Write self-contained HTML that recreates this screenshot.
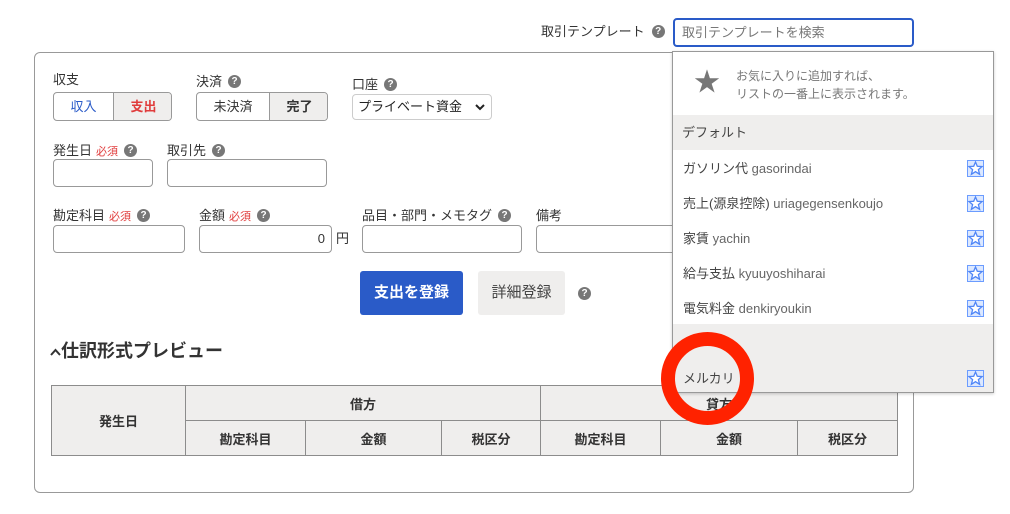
<!DOCTYPE html>
<html><head><meta charset="utf-8"><style>
*{box-sizing:border-box;margin:0;padding:0}
body{width:1010px;height:514px;background:#fff;font-family:"Liberation Sans","Noto Sans CJK JP",sans-serif;color:#333;font-size:13px;position:relative;overflow:hidden}
.a{position:absolute}
.q{display:inline-block;vertical-align:middle;width:13px;height:13px;border-radius:50%;background:#777;color:#fff;font-size:10px;font-weight:bold;text-align:center;line-height:13px;margin-left:6px;margin-top:-3px}
.in{position:absolute;border:1px solid #999;border-radius:4px;background:#fff}
.lbl{position:absolute;font-size:13px;color:#333;white-space:nowrap;line-height:16px}
.req{color:#e03c3c;font-size:11px;margin-left:4px}
table{position:absolute;left:51px;top:385px;width:847px;border-collapse:collapse;background:#efeeed}
td{border:1px solid #8c8c8c;text-align:center;font-weight:bold;font-size:13px;height:35px}
.it{position:absolute;left:0;width:321px;height:35px;padding-left:10px;line-height:35px;font-size:13px;color:#444}
.it span{color:#666}
.st{position:absolute;right:10px;top:9px;width:17px;height:17px}
</style></head><body>
<div class="lbl" style="left:541px;top:24px">取引テンプレート<span class="q" style="margin-left:7px">?</span></div>
<div class="a" style="left:673px;top:18px;width:241px;height:29px;border:2px solid #2a5bc8;border-radius:4px;padding-left:7px;line-height:25px;color:#777;font-size:13px">取引テンプレートを検索</div>

<div class="a" style="left:34px;top:52px;width:880px;height:441px;border:1px solid #999;border-radius:6px"></div>

<div class="lbl" style="left:53px;top:72px">収支</div>
<div class="in" style="left:53px;top:92px;width:119px;height:29px;overflow:hidden">
 <div class="a" style="left:0;top:0;width:59px;height:27px;line-height:27px;text-align:center;color:#2a5bc8">収入</div>
 <div class="a" style="left:59px;top:0;width:60px;height:27px;line-height:27px;text-align:center;color:#e03c3c;background:#efeeed;border-left:1px solid #999;font-weight:bold">支出</div>
</div>
<div class="lbl" style="left:196px;top:74px">決済<span class="q">?</span></div>
<div class="in" style="left:196px;top:92px;width:132px;height:29px;overflow:hidden">
 <div class="a" style="left:0;top:0;width:72px;height:27px;line-height:27px;text-align:center">未決済</div>
 <div class="a" style="left:72px;top:0;width:60px;height:27px;line-height:27px;text-align:center;background:#efeeed;border-left:1px solid #999;font-weight:bold">完了</div>
</div>
<div class="lbl" style="left:352px;top:77px">口座<span class="q">?</span></div>
<div class="in" style="left:352px;top:94px;width:140px;height:26px;border-color:#ccc;padding-left:5px;line-height:24px;font-size:13px;color:#222">プライベート資金
<svg class="a" style="right:6px;top:8px" width="10" height="8" viewBox="0 0 10 8"><path d="M1 2 L5 6 L9 2" fill="none" stroke="#222" stroke-width="2"/></svg></div>

<div class="lbl" style="left:53px;top:143px">発生日<span class="req">必須</span><span class="q">?</span></div>
<div class="lbl" style="left:167px;top:143px">取引先<span class="q">?</span></div>
<div class="in" style="left:53px;top:159px;width:100px;height:28px"></div>
<div class="in" style="left:167px;top:159px;width:160px;height:28px"></div>

<div class="lbl" style="left:53px;top:208px">勘定科目<span class="req">必須</span><span class="q">?</span></div>
<div class="lbl" style="left:199px;top:208px">金額<span class="req">必須</span><span class="q">?</span></div>
<div class="lbl" style="left:362px;top:208px">品目・部門・メモタグ<span class="q">?</span></div>
<div class="lbl" style="left:536px;top:208px">備考</div>
<div class="in" style="left:53px;top:225px;width:132px;height:28px"></div>
<div class="in" style="left:199px;top:225px;width:133px;height:28px;text-align:right;padding-right:6px;line-height:26px">0</div>
<div class="lbl" style="left:336px;top:231px">円</div>
<div class="in" style="left:362px;top:225px;width:160px;height:28px"></div>
<div class="in" style="left:536px;top:225px;width:160px;height:28px"></div>

<div class="a" style="left:360px;top:271px;width:103px;height:44px;background:#2a5bc8;border-radius:3px;color:#fff;font-weight:bold;font-size:15px;text-align:center;line-height:44px">支出を登録</div>
<div class="a" style="left:478px;top:271px;width:87px;height:44px;background:#efeeed;border-radius:3px;color:#444;font-size:15px;text-align:center;line-height:44px">詳細登録</div>
<span class="q a" style="left:572px;top:290px">?</span>

<div class="a" style="left:50px;top:339px;font-size:18px;font-weight:bold;color:#333;line-height:24px"><svg width="11" height="8" viewBox="0 0 11 8" style="vertical-align:middle"><path d="M1 7 L5.5 2 L10 7" fill="none" stroke="#333" stroke-width="2"/></svg>仕訳形式プレビュー</div>

<table>
<tr><td rowspan="2" style="width:134px">発生日</td><td colspan="3">借方</td><td colspan="3">貸方</td></tr>
<tr><td style="width:120px">勘定科目</td><td style="width:136px">金額</td><td style="width:99px">税区分</td><td style="width:120px">勘定科目</td><td style="width:137px">金額</td><td>税区分</td></tr>
</table>

<svg width="0" height="0" style="position:absolute"><defs><symbol id="s" viewBox="0 0 17 17"><rect x="0.5" y="0.5" width="16" height="16" fill="#dce8ff" stroke="#6b9cff"/><path d="M8.5 2 L10.3 6.3 L15 6.6 L11.4 9.6 L12.6 14.3 L8.5 11.7 L4.4 14.3 L5.6 9.6 L2 6.6 L6.7 6.3 Z" fill="#fff" stroke="#4f86f7" stroke-width="1.3"/></symbol></defs></svg>

<div class="a" style="left:672px;top:51px;width:322px;height:342px;border:1px solid #999;background:#fff;box-shadow:0 1px 3px rgba(0,0,0,.2);overflow:hidden">
 <div class="a" style="left:21px;top:16px;font-size:26px;color:#777;line-height:28px">★</div>
 <div class="a" style="left:63px;top:15px;font-size:12px;color:#777;line-height:18px">お気に入りに追加すれば、<br>リストの一番上に表示されます。</div>
 <div class="a" style="left:0;top:63px;width:322px;height:35px;background:#efeeed;padding-left:9px;line-height:35px;color:#444">デフォルト</div>
 <div class="it" style="top:99px">ガソリン代 <span>gasorindai</span><svg class="st"><use href="#s"/></svg></div>
 <div class="it" style="top:134px">売上(源泉控除) <span>uriagegensenkoujo</span><svg class="st"><use href="#s"/></svg></div>
 <div class="it" style="top:169px">家賃 <span>yachin</span><svg class="st"><use href="#s"/></svg></div>
 <div class="it" style="top:204px">給与支払 <span>kyuuyoshiharai</span><svg class="st"><use href="#s"/></svg></div>
 <div class="it" style="top:239px">電気料金 <span>denkiryoukin</span><svg class="st"><use href="#s"/></svg></div>
 <div class="a" style="left:0;top:272px;width:322px;height:70px;background:#efeeed"></div>
 <div class="it" style="top:309px">メルカリ<svg class="st"><use href="#s"/></svg></div>
</div>

<div class="a" style="left:661px;top:332px;width:93px;height:93px;border:14px solid #ff2200;border-radius:50%"></div>
</body></html>
